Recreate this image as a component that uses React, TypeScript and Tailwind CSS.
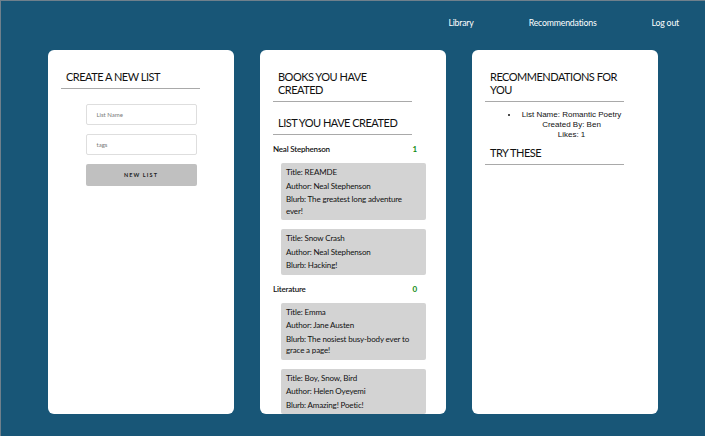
import React from 'react';

const books = [
    {
        list: 'Neal Stephenson',
        likes: 1,
        items: [
            { title: 'REAMDE', author: 'Neal Stephenson', blurb: 'The greatest long adventure ever!' },
            { title: 'Snow Crash', author: 'Neal Stephenson', blurb: 'Hacking!' },
        ],
    },
    {
        list: 'Literature',
        likes: 0,
        items: [
            { title: 'Emma', author: 'Jane Austen', blurb: 'The nosiest busy-body ever to grace a page!' },
            { title: 'Boy, Snow, Bird', author: 'Helen Oyeyemi', blurb: 'Amazing! Poetic!' },
        ],
    },
];

const Heading: React.FC<{ children: React.ReactNode }> = ({ children }) => (
    <div className="w-[139px] border-b border-[#a9a9a9] pl-[5px] pb-[5px]">
        <h2 className="text-[11px] leading-[13px] tracking-[-0.5px] text-[#111]">{children}</h2>
    </div>
);

const App: React.FC = () => {
    return (
        <div className="h-[436px] w-full bg-[#185677] border-t border-l border-[#6f808c] font-['Lato',sans-serif] overflow-hidden">
            {/* Nav */}
            <nav className="flex justify-end gap-[55px] pr-[26px] pt-[15px] h-[49px] text-[8.75px] text-white tracking-[-0.2px]">
                <a>Library</a>
                <a>Recommendations</a>
                <a>Log out</a>
            </nav>

            <div className="grid grid-cols-3 gap-[26px] px-[47px]">
                {/* Create list */}
                <section className="bg-white rounded-[6px] h-[364px] pl-[13px] pt-[20px]">
                    <Heading>CREATE A NEW LIST</Heading>
                    <div className="mt-[15px] flex flex-col items-center gap-[9px] pr-[13px]">
                        <div className="w-[111px] h-[21px] border border-[#dedede] rounded-[2px] pl-[10px] flex items-center text-[6px] text-[#777]">List Name</div>
                        <div className="w-[111px] h-[21px] border border-[#dedede] rounded-[2px] pl-[10px] flex items-center text-[6px] text-[#777]">tags</div>
                        <div className="w-[111px] h-[22px] bg-[#c0c0c0] rounded-[2px] flex items-center justify-center text-[5.5px] font-bold tracking-[0.2em] text-[#222]">NEW LIST</div>
                    </div>
                </section>

                {/* Books */}
                <section className="bg-white rounded-[6px] h-[364px] pl-[13px] pt-[20px] overflow-hidden">
                    <Heading>BOOKS YOU HAVE CREATED</Heading>
                    <div className="mt-[14px]">
                        <Heading>LIST YOU HAVE CREATED</Heading>
                    </div>
                    <div className="pr-[20px]">
                        {books.map((group) => (
                            <div key={group.list}>
                                <div className="flex justify-between items-center w-[144px] mt-[9px] text-[8px] leading-[10px] font-semibold text-[#111] tracking-[-0.2px]">
                                    <span>{group.list}</span>
                                    <span className="text-[#118a11] font-bold">{group.likes}</span>
                                </div>
                                <div className="mt-[9px] flex flex-col gap-[9px] pl-[8px]">
                                    {group.items.map((b) => (
                                        <div key={b.title} className="bg-[#d3d3d3] rounded-[2px] pl-[5px] pr-[12px] pt-[4px] pb-[3px] text-[8px] leading-[11.5px] text-[#111] tracking-[-0.15px]">
                                            <p className="mb-[2px]">Title: {b.title}</p>
                                            <p className="mb-[2px]">Author: {b.author}</p>
                                            <p>Blurb: {b.blurb}</p>
                                        </div>
                                    ))}
                                </div>
                            </div>
                        ))}
                    </div>
                </section>

                {/* Recommendations */}
                <section className="bg-white rounded-[6px] h-[364px] pl-[13px] pt-[20px]">
                    <Heading>RECOMMENDATIONS FOR YOU</Heading>
                    <ul className="w-[139px] mt-[8px] pl-[34px] list-disc text-center font-['Liberation_Sans',Arial,sans-serif] text-[8px] leading-[10px] text-[#111]">
                        <li>
                            List Name: Romantic Poetry
                            <br />
                            Created By: Ben
                            <br />
                            Likes: 1
                        </li>
                    </ul>
                    <div className="mt-[6px]">
                        <Heading>TRY THESE</Heading>
                    </div>
                </section>
            </div>
        </div>
    );
};

export default App;
